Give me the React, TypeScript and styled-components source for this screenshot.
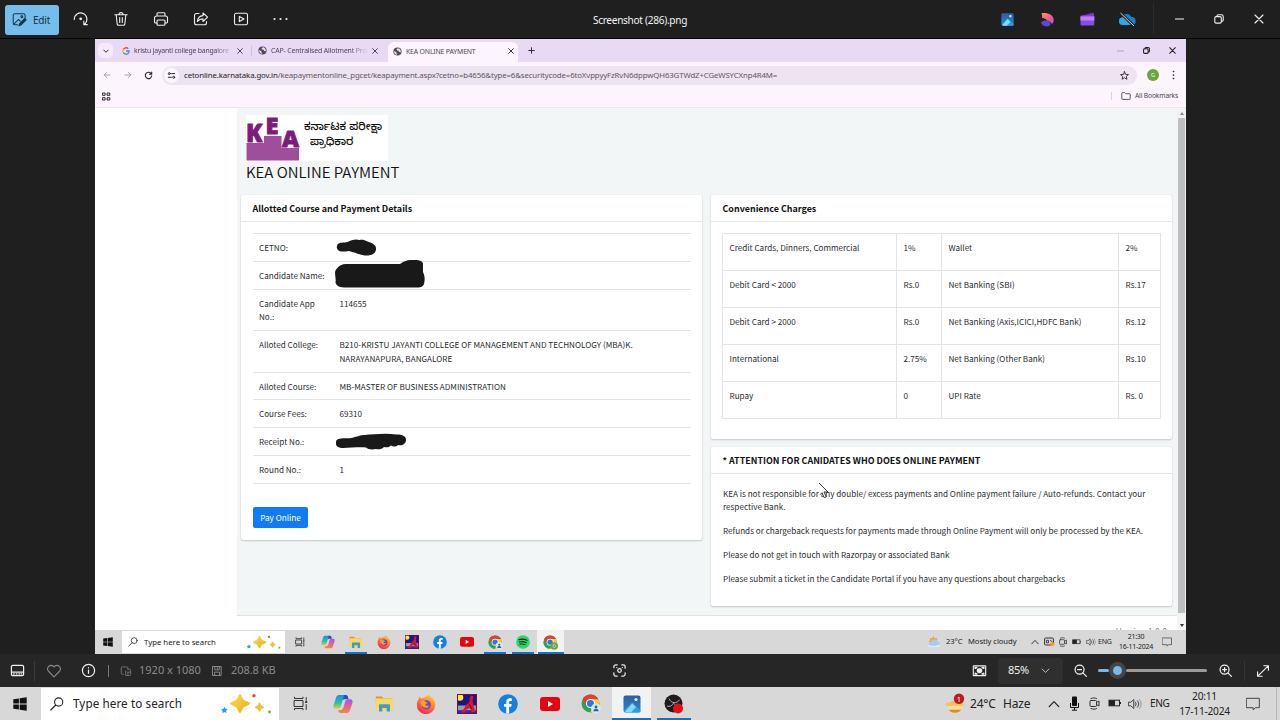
import React from 'react';
import styled, { createGlobalStyle } from 'styled-components';

const ui = `'Noto Sans', 'Open Sans', sans-serif`;
const pageFont = `'Noto Sans CJK SC', 'Open Sans', sans-serif`;

const GlobalStyle = createGlobalStyle`
  * {
    box-sizing: border-box;
  }

  body {
    margin: 0;
    background: #1f1f1f;
    overflow: hidden;
  }

  svg {
    display: block;
    flex: none;
  }
`;

/* ---------- shared parts ---------- */

const Screen = styled.div`
  width: 1280px;
  height: 720px;
  display: flex;
  flex-direction: column;
  background: #1f1f1f;
  font-family: ${ui};
  overflow: hidden;
`;

const Slot = styled.div<{ $w: number }>`
  flex: none;
  width: ${(p) => p.$w}px;
  height: 100%;
  display: flex;
  align-items: center;
  justify-content: center;
`;

const Spacer = styled.div`
  flex: 1;
`;

const Label = styled.span<{ $w: number; $size: number; $color?: string; $ls?: number }>`
  flex: none;
  width: ${(p) => p.$w}px;
  font-size: ${(p) => p.$size}px;
  letter-spacing: ${(p) => p.$ls ?? 0}px;
  color: ${(p) => p.$color ?? '#222'};
  line-height: 1.3;
  white-space: nowrap;
`;

const Divider = styled.div<{ $h: number; $color: string }>`
  flex: none;
  width: 1px;
  height: ${(p) => p.$h}px;
  background: ${(p) => p.$color};
`;

/* ---------- photo viewer ---------- */

const ViewerBar = styled.header`
  flex: none;
  height: 39px;
  display: grid;
  grid-template-columns: 1fr auto 1fr;
  align-items: center;
  padding: 0 1px 0 5px;
  border-bottom: 1px solid #050505;
`;

const BarGroup = styled.div<{ $end?: boolean }>`
  height: 38px;
  display: flex;
  align-items: center;
  justify-content: ${(p) => (p.$end ? 'flex-end' : 'flex-start')};
`;

const EditButton = styled.button`
  flex: none;
  width: 54px;
  height: 30px;
  margin: 1px 2px 0 0;
  padding: 0 0 0 7px;
  display: flex;
  align-items: center;
  gap: 6px;
  border: 0;
  border-radius: 3px;
  background: #77bdeb;
  color: #12303f;
  font: 10px ${ui};
  letter-spacing: -0.2px;
`;

const FileName = styled.h1`
  margin: 2px 0 0 -4px;
  font-size: 10.1px;
  font-weight: 400;
  letter-spacing: -0.3px;
  color: #f4f4f4;
`;

const Canvas = styled.div`
  flex: none;
  height: 615px;
  padding-left: 95px;
`;

const StatusBar = styled.footer`
  flex: none;
  height: 33px;
  display: flex;
  align-items: center;
  background: #262626;
`;

const ZoomLevel = styled.div`
  flex: none;
  width: 65px;
  height: 26px;
  padding-left: 10px;
  display: flex;
  align-items: center;
  border-radius: 3px;
  background: #2f2f2f;
`;

const Slider = styled.div`
  flex: none;
  width: 109px;
  height: 18px;
  display: flex;
  align-items: center;
`;

const Track = styled.div<{ $w: number; $color: string }>`
  width: ${(p) => p.$w}px;
  height: 3px;
  border-radius: 2px;
  background: ${(p) => p.$color};
`;

const Thumb = styled.div`
  width: 17px;
  height: 17px;
  border: 4px solid #454545;
  border-radius: 50%;
  background: #76b9ed;
`;

/* ---------- browser ---------- */

const Browser = styled.div`
  width: 1091px;
  height: 615px;
  display: flex;
  flex-direction: column;
  background: #fff;
  overflow: hidden;
`;

const TabStrip = styled.div`
  flex: none;
  height: 23px;
  display: flex;
  align-items: center;
  background: #e8daf4;
`;

const TabMenu = styled.div`
  flex: none;
  width: 15px;
  height: 15px;
  margin: 0 4px 0 3px;
  display: grid;
  place-items: center;
  border-radius: 5px;
  background: #f4eafb;
`;

const Tab = styled.div<{ $w: number; $active?: boolean }>`
  flex: none;
  width: ${(p) => p.$w}px;
  height: ${(p) => (p.$active ? '20px' : '16px')};
  margin-top: ${(p) => (p.$active ? '3px' : '0')};
  padding: ${(p) => (p.$active ? '0 4px 2px 5px' : '0 6px 0 5px')};
  display: flex;
  align-items: center;
  gap: 4px;
  border-radius: 6px 6px 0 0;
  background: ${(p) => (p.$active ? '#fcf4fe' : 'transparent')};
`;

const TabTitle = styled.span<{ $fade?: boolean; $ls?: number }>`
  flex: 1;
  min-width: 0;
  overflow: hidden;
  white-space: nowrap;
  font-size: 6.9px;
  letter-spacing: ${(p) => p.$ls ?? -0.15}px;
  color: #4b4650;
  mask-image: ${(p) => (p.$fade ? 'linear-gradient(90deg, #000 82%, transparent)' : 'none')};
`;

const AddressRow = styled.div`
  flex: none;
  height: 26px;
  display: flex;
  align-items: center;
  background: #fcf5fe;
`;

const Omnibox = styled.div`
  flex: none;
  width: 975px;
  height: 19px;
  margin-left: 1px;
  padding: 0 8px 0 2px;
  display: flex;
  align-items: center;
  border-radius: 10px;
  background: #ece4f0;
`;

const SiteChip = styled.div`
  width: 15px;
  height: 15px;
  margin-right: 5px;
  display: grid;
  place-items: center;
  border-radius: 50%;
  background: #fbf5fd;
`;

const Url = styled.span`
  flex: 1;
  font-size: 7.8px;
  letter-spacing: -0.11px;
  color: #5d5861;
  white-space: nowrap;

  b {
    font-weight: 400;
    color: #1e1b20;
  }
`;

const Avatar = styled.div`
  width: 12px;
  height: 12px;
  display: grid;
  place-items: center;
  border-radius: 50%;
  background: #67a63a;
  color: #e9f5df;
  font-size: 6px;
  line-height: 1;
`;

const BookmarkRow = styled.div`
  flex: none;
  height: 20px;
  padding-bottom: 3px;
  display: flex;
  align-items: center;
  background: #fcf5fe;
  border-bottom: 1px solid #eee3f0;
`;

const Viewport = styled.div`
  flex: none;
  height: 522px;
  display: flex;
  overflow: hidden;
`;

const Sidebar = styled.aside`
  flex: none;
  width: 142px;
  background: #fff;
`;

const Scrollbar = styled.div`
  flex: none;
  width: 9px;
  display: grid;
  grid-template-rows: 10px 495px 1fr;
  justify-items: center;
  background: #f3f3f4;
`;

const ScrollThumb = styled.div`
  width: 7px;
  background: #bdbfc1;
`;

const ScrollArrow = styled.div<{ $down?: boolean }>`
  width: 0;
  height: 0;
  margin: ${(p) => (p.$down ? '11px' : '4px')} 0 0;
  border: 2px solid transparent;
  border-top: ${(p) => (p.$down ? '3px solid #333' : '0')};
  border-bottom: ${(p) => (p.$down ? '0' : '3px solid #888')};
`;

/* ---------- payment page ---------- */

const Main = styled.main`
  flex: none;
  width: 940px;
  height: 522px;
  overflow: hidden;
  background: #f3f6f7;
  color: #2a2d30;
  font-family: ${pageFont};
  font-size: 8.15px;
  line-height: 13.7px;
`;

const PageHead = styled.div`
  height: 87px;
  padding: 7px 0 0 9px;
`;

const LogoBox = styled.div`
  width: 142px;
  height: 46px;
  display: flex;
  background: #fff;
`;

const LogoText = styled.div`
  margin: 6px 0 0 4px;
  width: 80px;
  font: 500 11.1px/15px 'Noto Sans Kannada', 'Noto Sans', sans-serif;
  color: #111;
  white-space: nowrap;

  div + div {
    padding-left: 6px;
  }
`;

const PageTitle = styled.h2`
  margin: -1px 0 0;
  font-size: 15px;
  font-weight: 350;
  line-height: 23px;
  color: #111;
`;

const Columns = styled.div`
  height: 420px;
  padding: 0 5px 0 4px;
  display: grid;
  grid-template-columns: 461px 461px;
  align-items: start;
  gap: 9px;
`;

const RightColumn = styled.div`
  display: flex;
  flex-direction: column;
  gap: 8px;
`;

const Card = styled.section<{ $h: number }>`
  height: ${(p) => p.$h}px;
  border-radius: 2px;
  background: #fff;
  box-shadow: 0 0 1px rgba(0, 0, 0, 0.15), 0 1px 2px rgba(0, 0, 0, 0.18);
`;

const CardTitle = styled.h3`
  margin: 0;
  height: 27px;
  padding: 0 11.5px;
  border-bottom: 1px solid #e4e5e6;
  font-size: 8.93px;
  font-weight: 700;
  line-height: 28px;
  color: #111;
`;

const CardBody = styled.div`
  padding: 11px 11px 0 12px;
`;

const Details = styled.dl`
  margin: 0;
  border-bottom: 1px solid #e2e4e6;
`;

const DetailRow = styled.div<{ $tall?: boolean }>`
  height: ${(p) => (p.$tall ? '41.5px' : '27.8px')};
  padding: 7px 6px 0;
  display: grid;
  grid-template-columns: 80.5px 1fr;
  border-top: 1px solid #e2e4e6;

  dt,
  dd {
    margin: 0;
  }

  dt {
    width: 72px;
  }

  dd {
    position: relative;
    width: 310px;
  }
`;

const Scribble = styled.svg`
  position: absolute;
  overflow: visible;
  left: 0;
  top: 0;
`;

const PayButton = styled.button`
  width: 55px;
  height: 21px;
  margin-top: 23px;
  padding: 0;
  border: 0;
  border-radius: 2px;
  background: #117bf7;
  color: #fff;
  font: 8.2px/20px ${pageFont};
`;

const Charges = styled.div`
  display: grid;
  grid-template-columns: 174px 45px 177px 42px;
  grid-auto-rows: 37px;
  width: 439px;
  margin-left: -1px;
  border-left: 1px solid #e2e4e6;
  border-top: 1px solid #e2e4e6;
`;

const Charge = styled.div`
  padding: 7px 6.5px;
  border-right: 1px solid #e2e4e6;
  border-bottom: 1px solid #e2e4e6;
`;

const Notice = styled.p`
  margin: 0 0 10.1px;
`;

const NoticeBody = styled.div`
  position: relative;
  padding: 12.5px 11px 0 12px;
`;

const Pointer = styled.svg`
  position: absolute;
  left: 107px;
  top: 8px;
`;

const PageFooter = styled.div`
  height: 15px;
  padding: 9px 10px 0;
  overflow: hidden;
  border-top: 1px solid #dfe2e5;
  background: #fff;
  text-align: right;
  color: #869099;
  font-size: 8.6px;
`;

/* ---------- taskbars ---------- */

const Taskbar = styled.div<{ $h: number }>`
  flex: none;
  height: ${(p) => p.$h}px;
  display: flex;
  align-items: center;
  background: #d8d8d8;
`;

const SearchBox = styled.div<{ $w: number; $h: number; $gap: number }>`
  flex: none;
  width: ${(p) => p.$w}px;
  height: ${(p) => p.$h}px;
  padding: 0 ${(p) => p.$gap}px 0 ${(p) => p.$gap + 2}px;
  display: flex;
  align-items: center;
  justify-content: space-between;
  background: #fff;
`;

const TaskButton = styled.div<{ $w: number; $line?: number; $active?: boolean }>`
  flex: none;
  width: ${(p) => p.$w}px;
  height: 100%;
  display: flex;
  align-items: center;
  justify-content: center;
  background-color: ${(p) => (p.$active ? '#f2f2f2' : 'transparent')};
  background-image: ${(p) => (p.$line ? 'linear-gradient(#1472c4, #1472c4)' : 'none')};
  background-repeat: no-repeat;
  background-position: bottom center;
  background-size: ${(p) => p.$line ?? 0}px 2px;
`;

const Clock = styled.div<{ $w: number; $size: number; $lh: number; $ls: number }>`
  flex: none;
  width: ${(p) => p.$w}px;
  text-align: center;
  font-size: ${(p) => p.$size}px;
  line-height: ${(p) => p.$lh}px;
  letter-spacing: ${(p) => p.$ls}px;
  color: #222;
  white-space: nowrap;
`;

/* ---------- line icons ---------- */

type IconProps = { s?: number; color?: string };

const Line: React.FC<IconProps & { box?: number; w?: number; children: React.ReactNode }> = ({
  s = 16,
  color = '#f0f0f0',
  box = 16,
  w = 1.1,
  children,
}) => (
  <svg
    width={s}
    height={s}
    viewBox={`0 0 ${box} ${box}`}
    fill="none"
    stroke={color}
    strokeWidth={w}
    strokeLinecap="round"
    strokeLinejoin="round"
  >
    {children}
  </svg>
);

const EditIcon = () => (
  <Line s={15} color="#12384f">
    <path d="M14 6V3.5A1.7 1.7 0 0 0 12.3 1.8H3A1.7 1.7 0 0 0 1.3 3.5V12A1.7 1.7 0 0 0 3 13.7H6" />
    <path d="M2 13l4.8-5 2 1.8" />
    <path d="M13.6 6.8L8.5 12l-1.200 2.800L10 13.600l5.100-5.200z" fill="#12384f" />
    <circle cx="10.500" cy="5" r="1" />
  </Line>
);

const RotateIcon = () => (
  <Line>
    <path d="M1.300 8.500A6.300 6.300 0 1 1 11.300 13.300M14.300 13.600h-3.500v-3.500" />
    <circle cx="7.700" cy="7.800" r="1.400" fill="#f0f0f0" stroke="none" />
  </Line>
);

const TrashIcon = () => (
  <Line>
    <path d="M1.800 3.800h12.400M3.200 4l1 9.200a1.300 1.300 0 0 0 1.300 1.100h5a1.300 1.300 0 0 0 1.300-1.100l1-9.200M6 3.600a2 2 0 0 1 4 0M6.700 6.500v5M9.300 6.500v5" />
  </Line>
);

const PrintIcon = () => (
  <Line>
    <path d="M4 5V2.800c0-.6.400-1 1-1h6c.6 0 1 .4 1 1V5M4 12H2.800a1.300 1.300 0 0 1-1.300-1.300V7a2 2 0 0 1 2-2h9a2 2 0 0 1 2 2v3.700a1.300 1.300 0 0 1-1.300 1.300H12" />
    <rect x="4" y="9" width="8" height="5.200" rx="1" />
  </Line>
);

const ShareIcon = () => (
  <Line>
    <path d="M6 2.500H3.500a2 2 0 0 0-2 2v7.300a2 2 0 0 0 2 2h8a2 2 0 0 0 2-2V10.500" />
    <path d="M10 2v2.600C6.500 4.900 4.800 7 4.400 10.500 6 8.500 7.700 7.900 10 7.900v2.600l4.600-4.300z" />
  </Line>
);

const PlayIcon = () => (
  <Line>
    <rect x="1.500" y="2.300" width="13" height="11.400" rx="1.800" />
    <path d="M6.300 5.400v5.200L11 8z" />
  </Line>
);

const DotsIcon = () => (
  <svg width="17" height="4" viewBox="0 0 17 4" fill="#f0f0f0">
    <circle cx="1.500" cy="2" r="1.100" />
    <circle cx="7.500" cy="2" r="1.100" />
    <circle cx="13.500" cy="2" r="1.100" />
  </svg>
);

const CloseIcon: React.FC<IconProps> = ({ s = 10, color = '#f0f0f0' }) => (
  <Line s={s} box={10} w={s < 8 ? 1.5 : 1.1} color={color}>
    <path d="M1 1l8 8M9 1L1 9" />
  </Line>
);

const RestoreIcon: React.FC<IconProps> = ({ s = 10, color = '#f0f0f0' }) => (
  <Line s={s} box={10} color={color} w={s < 8 ? 1.5 : 1.1}>
    <rect x=".8" y="2.600" width="6.500" height="6.500" rx="1.300" />
    <path d="M3 2.400V2A1.200 1.200 0 0 1 4.200.8H7.500A1.700 1.700 0 0 1 9.200 2.500V6A1.200 1.200 0 0 1 8 7.200H7.500" />
  </Line>
);

const MinIcon: React.FC<IconProps> = ({ s = 9, color = '#c4c4c4' }) => (
  <svg width={s} height="2" viewBox="0 0 9 2" preserveAspectRatio="none">
    <path d="M0 1h9" stroke={color} strokeWidth="1.300" />
  </svg>
);

const Chevron: React.FC<IconProps & { up?: boolean; w?: number }> = ({ s = 8, color = '#222', up, w = 1.1 }) => (
  <Line s={s} box={8} color={color} w={w}>
    <path d={up ? 'M.8 5.800L4 2.400l3.200 3.400' : 'M1 2.700l3 3 3-3'} />
  </Line>
);

const FilmstripIcon = () => (
  <Line s={15} w={1.3}>
    <rect x="1.500" y="2.500" width="13" height="11" rx="1.500" />
    <path d="M2 9.700h12" />
    <path d="M3.800 11.700h.8M6.700 11.700h.8M9.500 11.700h.8M12 11.700h.5" />
  </Line>
);

const HeartIcon = () => (
  <Line s={16} color="#8a8a8a">
    <path d="M8 13.800L2.300 8A3.500 3.500 0 0 1 7.300 3.200L8 3.900l.7-.7A3.500 3.500 0 0 1 13.700 8z" />
  </Line>
);

const InfoIcon = () => (
  <Line s={15} w={1.3}>
    <circle cx="8" cy="8" r="6.500" />
    <path d="M8 7.500v3.500M8 5v.2" />
  </Line>
);

const DimensionsIcon = () => (
  <Line s={12} color="#777" w={1.2}>
    <path d="M4.500 12.500H3.300A1.600 1.600 0 0 1 1.700 10.900V4A1.600 1.600 0 0 1 3.300 2.500H9A1.600 1.600 0 0 1 10.500 4v1.500" />
    <path d="M10.500 5.500h2A1.600 1.600 0 0 1 14.200 7v5.500a1.600 1.600 0 0 1-1.600 1.500H7.500V8M10.500 9.500h3.500M10.500 9.500V14" />
  </Line>
);

const SaveIcon = () => (
  <Line s={12} color="#8a8a8a" w={1.3}>
    <path d="M2.500 2h11v12h-11zM5 2v4.500h6V2M4.800 14V9.500h6.500V14M8.500 3.500v1.500" />
  </Line>
);

const FocusIcon = () => (
  <Line s={15} w={1.3}>
    <path d="M2 5V4a2 2 0 0 1 2-2h1.500M10.500 2H12a2 2 0 0 1 2 2v1.500M14 10.500V12a2 2 0 0 1-2 2h-1.500M5.500 14H4a2 2 0 0 1-2-2v-1.500" />
    <circle cx="8" cy="8" r="1.900" />
    <path d="M5 4.800h.1M11 4.800h.1" />
  </Line>
);

const FitIcon = () => (
  <Line s={15} w={1.2}>
    <rect x="1.400" y="3" width="13.200" height="10.500" rx=".5" />
    <path d="M3.500 5.500v-.6h1.500M11 4.900h1.500v.6M12.500 11v.6H11M5 11.600H3.500V11" strokeWidth="1.800" />
    <rect x="5" y="5.700" width="6" height="5.200" rx="2.300" fill="#eee" stroke="none" />
  </Line>
);

const ZoomIcon: React.FC<{ plus?: boolean }> = ({ plus }) => (
  <Line s={15} w={1.3}>
    <circle cx="7" cy="7" r="4.800" />
    <path d={plus ? 'M10.600 10.600L14.300 14.300M4.900 7h4.200M7 4.900v4.200' : 'M10.600 10.600L14.300 14.300M4.900 7h4.200'} />
  </Line>
);

const ExpandIcon = () => (
  <Line s={14} w={1.3}>
    <path d="M9 2h5.200v5M14 2.200L2 13.800M7 14H1.800V9" />
  </Line>
);

const ArrowIcon: React.FC<{ right?: boolean }> = ({ right }) => (
  <Line s={8} box={8} color="#a39ca8" w={0.9}>
    <path d={right ? 'M.8 4h6M4.300 1.500L6.900 4 4.300 6.500' : 'M7.200 4h-6M3.700 1.500L1.100 4l2.600 2.500'} />
  </Line>
);

const ReloadIcon = () => (
  <Line s={9} box={9} color="#2b2830" w={1.1}>
    <path d="M7.700 4.800A3.200 3.200 0 1 1 6.900 2.300M7.700 1v2.200H5.500" />
  </Line>
);

const TuneIcon = () => (
  <Line s={9} box={9} color="#2b2830" w={1}>
    <circle cx="2.300" cy="2.600" r="1" />
    <path d="M4.600 2.600h3M1.300 6.300h3" />
    <circle cx="6.700" cy="6.300" r="1" />
  </Line>
);

const StarIcon = () => (
  <Line s={9} box={16} color="#2b2830" w={1.6}>
    <path d="M8 1.300l2 4.700 5 .4-3.800 3.300 1.200 5L8 12l-4.400 2.700 1.200-5L1 6.400 6 6z" />
  </Line>
);

const MoreIcon = () => (
  <svg width="3" height="10" viewBox="0 0 3 10" fill="#2b2830">
    <circle cx="1.500" cy="1.500" r=".85" />
    <circle cx="1.500" cy="5" r=".85" />
    <circle cx="1.500" cy="8.500" r=".85" />
  </svg>
);

const AppsIcon = () => (
  <Line s={9} box={9} color="#2b2830" w={1}>
    <rect x=".8" y="1" width="2.300" height="2.300" />
    <rect x="5.500" y="1" width="2.300" height="2.300" />
    <rect x=".8" y="5.700" width="2.300" height="2.300" />
    <rect x="5.500" y="5.700" width="2.300" height="2.300" />
  </Line>
);

const FolderLine = () => (
  <Line s={10} box={10} color="#4b4650" w={0.9}>
    <path d="M.8 2.200c0-.4.200-.6.600-.6h2.400l1 1.100h3.900c.3 0 .5.200.5.500v4.600c0 .4-.2.600-.6.600H1.400c-.4 0-.6-.2-.6-.6z" />
  </Line>
);

const GlobeIcon = () => (
  <svg width="9" height="9" viewBox="0 0 16 16">
    <circle cx="8" cy="8" r="7.300" fill="#504b56" />
    <path d="M2 7l4 2.500 1 4.500C4 13.500 1.700 11 2 7zM8.500 2l-2 2 .5 2 3 .5 1 2.500 3 .2C14.500 5 12 2.300 8.500 2z" fill="#e9deef" />
  </svg>
);

const GoogleG = () => (
  <svg width="8" height="8" viewBox="0 0 16 16" fill="none" strokeWidth="2.600">
    <path d="M12.500 3.300A6.300 6.300 0 0 0 2.500 5" stroke="#ea4335" />
    <path d="M2.500 5a6.300 6.300 0 0 0 0 6" stroke="#fbbc05" />
    <path d="M2.500 11A6.300 6.300 0 0 0 12 12.800" stroke="#34a853" />
    <path d="M12 12.800a6.300 6.300 0 0 0 2.200-4.800H8" stroke="#4285f4" />
  </svg>
);

/* ---------- app icons ---------- */

const PhotosIcon: React.FC<IconProps> = ({ s = 13 }) => (
  <svg width={s} height={s} viewBox="0 0 18 18">
    <defs>
      <linearGradient id="photoSky" x1="0" y1="0" x2="0" y2="1">
        <stop offset="0" stopColor="#2e5f9e" />
        <stop offset="1" stopColor="#2a87d0" />
      </linearGradient>
    </defs>
    <rect x=".5" y=".5" width="17" height="17" rx="2" fill="url(#photoSky)" />
    <path d="M1 15.500L8.300 8.200a1.300 1.300 0 0 1 1.800 0L17.500 15.500V16a1.500 1.500 0 0 1-1.500 1.500H2.500z" fill="#2f9be2" />
    <path d="M2 16.500l7.200-8.100 3.800 3.600-5 5.500H3z" fill="#7fdcf7" />
    <circle cx="13" cy="4.500" r="1.600" fill="#d8f1fc" />
  </svg>
);

const DesignerIcon = () => (
  <svg width="14" height="15" viewBox="0 0 14 15">
    <defs>
      <linearGradient id="designTop" x1="0" y1="0" x2="1" y2="1">
        <stop offset="0" stopColor="#ff9a4d" />
        <stop offset=".6" stopColor="#e8579b" />
        <stop offset="1" stopColor="#a45cf0" />
      </linearGradient>
    </defs>
    <path d="M1.500 1.300C7 .2 13.700 2.500 13.700 8c0 2-.8 3.200-1.700 4-1.200-2.300-3-3-5-3.200C6.500 6.800 4 6.500 2 6 2.500 4 2 3 1.500 1.300z" fill="url(#designTop)" />
    <path d="M1 10c2.500-2 7-2.200 9 .3 1 1.200.6 2.500-.5 3.500-2.500 1.200-8 .8-8.500-3.800z" fill="#5b46d6" />
  </svg>
);

const ClipchampIcon = () => (
  <svg width="15" height="14" viewBox="0 0 15 14">
    <path d="M.8 4L12.500.8a1.200 1.200 0 0 1 1.500 1V5H.8z" fill="#6d36c4" />
    <rect x=".5" y="3.500" width="13.800" height="10" rx="1.300" fill="#8a4be8" />
    <path d="M.5 4.500h13.800v4H.5z" fill="#c27cf5" />
  </svg>
);

const CloudOffIcon = () => (
  <svg width="18" height="15" viewBox="0 0 18 15">
    <path d="M4.500 13A3.800 3.800 0 0 1 4 5.500 5 5 0 0 1 13.300 5 4 4 0 0 1 14 13z" fill="#1b7fcb" />
    <path d="M4.500 13A3.800 3.800 0 0 1 4 5.500c3 0 6.500 3 8 7.500z" fill="#31a5e8" />
    <path d="M2.500 1l13.500 13" stroke="#1f1f1f" strokeWidth="2.600" />
    <path d="M2.500 1l13.500 13" stroke="#d9d9d9" strokeWidth="1" />
  </svg>
);

const WindowsLogo: React.FC<IconProps> = ({ s = 14 }) => (
  <svg width={s} height={s} viewBox="0 0 14 14" fill="#111">
    <path d="M.3 2.200L5.900 1.400v5.200H.3zM6.700 1.300L13.700.3v6.300h-7zM.3 7.400h5.600v5.200L.3 11.800zM6.700 7.400h7v6.300l-7-1z" />
  </svg>
);

const SearchGlass: React.FC<IconProps> = ({ s = 14 }) => (
  <Line s={s} box={14} color="#222" w={1.1}>
    <circle cx="8.700" cy="5" r="4.100" />
    <path d="M5.700 8L.8 13" />
  </Line>
);

const Sparkles: React.FC<{ w: number }> = ({ w }) => (
  <svg width={w} height={(w * 22) / 52} viewBox="0 0 52 22">
    <defs>
      <linearGradient id="spark" x1="0" y1="0" x2="1" y2="1">
        <stop offset="0" stopColor="#ffdf5c" />
        <stop offset="1" stopColor="#e9a90f" />
      </linearGradient>
    </defs>
    <path d="M20 1c1.500 0 1.800 3.800 3.500 5.600S30 9 30 10.600s-5 2.400-6.500 4S21.500 20 20 20s-2-3.700-3.500-5.400-6.500-2.400-6.500-4 4.900-2.300 6.500-4S18.500 1 20 1z" fill="url(#spark)" />
    <path d="M39.500 9.500c.9 0 1 2 1.800 2.800s2.900 1.100 2.900 1.900-2.100 1.200-2.900 2-.9 2.600-1.800 2.600-1-1.800-1.800-2.600-2.900-1.200-2.900-2 2.100-1.100 2.900-1.900.9-2.800 1.800-2.800z" fill="#f2be3c" />
    <path d="M4.500 13.800l.9 2 2.200.3-1.400 1.700.2 2.100-2-.8-2.100 1.100.2-2.300-1.500-1.500 2.200-.5z" fill="#2f9fd8" />
    <circle cx="34" cy="2.800" r="1.700" fill="#d8532f" />
    <circle cx="49.500" cy="18.800" r="1.600" fill="#7cc142" />
  </svg>
);

const TaskViewIcon: React.FC<IconProps> = ({ s = 15 }) => (
  <Line s={s} box={15} color="#333" w={s < 12 ? 1.3 : 1}>
    <rect x="1.500" y="4.500" width="8.500" height="6" />
    <path d="M1.500 1.200v1.300h8.500V1.200M1.500 13.800v-1.300h8.500v1.300M13.200 1.500v2.500M13.200 8.500V13.500" />
    <path d="M13.200 4.800v2.200" strokeWidth="2" strokeLinecap="butt" />
  </Line>
);

const CopilotIcon: React.FC<IconProps> = ({ s = 20 }) => (
  <svg width={s} height={s} viewBox="0 0 20 20">
    <defs>
      <linearGradient id="cpA" x1="0" y1="0" x2="0" y2="1">
        <stop offset="0" stopColor="#1a8fe8" />
        <stop offset=".6" stopColor="#2fc0a8" />
        <stop offset="1" stopColor="#e8cf2e" />
      </linearGradient>
      <linearGradient id="cpB" x1="0" y1="0" x2="0" y2="1">
        <stop offset="0" stopColor="#9a5cf0" />
        <stop offset=".5" stopColor="#ec5b9a" />
        <stop offset="1" stopColor="#f6873c" />
      </linearGradient>
    </defs>
    <path d="M6 1h6.500c1.500 0 2 1 2.500 2.700h-2C11 3.700 10 5 9.300 7.500L8 12c-.6 2-1.500 2.800-3.500 2.800H2.500C.6 14.800 0 13 .6 11L3 3.700C3.600 2 4.500 1 6 1z" fill="url(#cpA)" />
    <path d="M11 1h1.500c1.600 0 2.200 1 2.700 2.800l.4 1.400h-4.300c-.6 0-1 .3-1.400 1L10.500 3z" fill="#1b55c4" />
    <path d="M14 19H7.500C6 19 5.500 18 5 16.300h2c2 0 3-1.300 3.700-3.800L12 8c.6-2 1.500-2.800 3.500-2.800h2c1.900 0 2.500 1.800 1.900 3.800L17 16.300C16.400 18 15.500 19 14 19z" fill="url(#cpB)" />
  </svg>
);

const ExplorerIcon: React.FC<IconProps> = ({ s = 19 }) => (
  <svg width={s} height={s} viewBox="0 0 19 19">
    <path d="M.8 2.500h6l1.500 1.700H17v4H.8z" fill="#d99c23" />
    <rect x=".8" y="4.500" width="17.400" height="12" rx=".6" fill="#fbd866" />
    <path d="M4 17.500v-6.300c0-.6.400-1 1-1h9c.6 0 1 .4 1 1v6.300h-3.300V14H7.300v3.500z" fill="#3b9fc0" />
  </svg>
);

const FirefoxIcon: React.FC<IconProps> = ({ s = 20 }) => (
  <svg width={s} height={s} viewBox="0 0 20 20">
    <defs>
      <linearGradient id="ffBody" x1=".8" y1="0" x2=".3" y2="1">
        <stop offset="0" stopColor="#ffd43a" />
        <stop offset=".45" stopColor="#ff8030" />
        <stop offset="1" stopColor="#e8295c" />
      </linearGradient>
    </defs>
    <path d="M13 .5c.5 1.500 2 2.300 3 3.300C18 5.500 19.300 8 19.200 11a9.200 9.200 0 0 1-18.400 0c0-2.800 1-4.600 2-6L3 2.700l2 1.800c1-.6 2-.8 3-.8C9.500 3 11 2 13 .5z" fill="url(#ffBody)" />
    <circle cx="10.300" cy="10.800" r="4.600" fill="#7548b5" />
    <path d="M4.500 7.500c2-1.300 4-.5 5.200.5l2 .4c-.6 1.200-2 1.300-2.400 2 .8 1.800 2.800 1.500 4 .8-.8 2.600-4.200 3.500-6.500 1.500C5.200 11.200 4.800 9.500 4.500 7.500z" fill="#ff9b34" />
  </svg>
);

const GameIcon: React.FC<IconProps> = ({ s = 20 }) => (
  <svg width={s} height={s} viewBox="0 0 20 20">
    <rect width="20" height="20" fill="#1b1490" />
    <path d="M1 11.500h18v5H1z" fill="#9a9aae" />
    <path d="M1 16.500h18v2.800H1z" fill="#2727c8" />
    <circle cx="3" cy="3.500" r="3.300" fill="#ffe92e" />
    <path d="M14 1.500l2.500 1-1 4 1 5 2 6.500h-4l-1.500-4-3.500 1.500-1.500 3H4l3-4L11 8z" fill="#d61a2b" />
    <path d="M13 5.500l-2.500 4.500M12.500 10.500l2 4.500" stroke="#4a0a22" strokeWidth="1" />
    <path d="M.5.5h19v19H.5z" fill="none" stroke="#7a1026" />
  </svg>
);

const FacebookIcon: React.FC<IconProps> = ({ s = 20 }) => (
  <svg width={s} height={s} viewBox="0 0 20 20">
    <circle cx="10" cy="10" r="9.800" fill="#1580e0" />
    <path d="M8.300 19.500v-6.800H6V9.900h2.300V8c0-2.500 1.400-3.700 3.600-3.700.8 0 1.500.1 1.900.2v2.400h-1.300c-1 0-1.400.6-1.400 1.500v1.500h2.600l-.5 2.800h-2.100v6.800z" fill="#fff" />
  </svg>
);

const YoutubeIcon: React.FC<IconProps> = ({ s = 20 }) => (
  <svg width={s} height={s * 0.7} viewBox="0 0 20 14">
    <rect width="20" height="14" rx="3" fill="#e6050f" />
    <path d="M8 4v6l5-3z" fill="#fff" />
  </svg>
);

const ChromeIcon: React.FC<IconProps & { badge: 'user' | 'g' }> = ({ s = 20, badge }) => (
  <svg width={s} height={s} viewBox="0 0 20 20">
    <circle cx="9.500" cy="9.500" r="9" fill="#34a04f" />
    <path d="M9.500.5a9 9 0 0 1 7.900 4.800H9.500L5.400 11.500 1.700 5A9 9 0 0 1 9.500.5z" fill="#e0402f" />
    <path d="M17.400 5.300A9 9 0 0 1 9 18.500l4.300-7-3.800-6.200z" fill="#fcc934" />
    <circle cx="9.500" cy="9.500" r="4.600" fill="#fff" />
    <circle cx="9.500" cy="9.500" r="3.600" fill="#2b78e4" />
    {badge === 'user' ? (
      <g>
        <circle cx="15" cy="14.500" r="4.900" fill="#d6e6f8" />
        <circle cx="15" cy="13" r="1.400" fill="#2c5f9e" />
        <path d="M12.300 17.300c.2-3.300 5.200-3.300 5.400 0z" fill="#2c5f9e" />
      </g>
    ) : (
      <g>
        <circle cx="15" cy="14.500" r="5" fill="#68a83c" />
        <rect x="13.500" y="12.500" width="3" height="4" rx="1.300" fill="none" stroke="#d9efc7" strokeWidth=".9" />
      </g>
    )}
  </svg>
);

const SpotifyIcon: React.FC<IconProps> = ({ s = 14 }) => (
  <svg width={s} height={s} viewBox="0 0 20 20" fill="none" stroke="#12251a" strokeLinecap="round">
    <circle cx="10" cy="10" r="9.800" fill="#2bd866" stroke="none" />
    <path d="M4.500 6.500c4-1.100 8-.7 11.200 1" strokeWidth="2" />
    <path d="M5 10c3.300-.9 6.700-.6 9.600 1" strokeWidth="1.700" />
    <path d="M5.500 13.200c2.800-.7 5.400-.4 7.800.9" strokeWidth="1.400" />
  </svg>
);

const ObsIcon = () => (
  <svg width="20" height="20" viewBox="0 0 20 20">
    <circle cx="9.500" cy="9.500" r="9" fill="#1d1b1e" />
    <path d="M5 4.500c1.500 3 3 4 5 4.200s4.500-1 5.500-3M9.700 8.700c-1.200 3-4 4.300-6.700 3.300M10 9.500c2 1.500 2.500 4 1 7" stroke="#bdbdbd" strokeWidth=".9" fill="none" />
    <circle cx="14" cy="14.500" r="5" fill="#e3101b" />
  </svg>
);

const MicIcon = () => (
  <svg width="11" height="15" viewBox="0 0 11 15" fill="#111">
    <rect x="3" y=".5" width="5" height="9.500" rx=".8" />
    <path d="M1.500 7v4.500h8V7M5.500 11.500V14M3 14.200h5" fill="none" stroke="#111" strokeWidth="1" />
  </svg>
);

const CameraIcon: React.FC<IconProps> = ({ s = 13 }) => (
  <Line s={s} box={13} color="#333" w={1}>
    <rect x="2" y="3.500" width="6.500" height="6" rx="1" />
    <path d="M8.500 5.500L11 4v5L8.500 7.500M3 1.500C5 .7 7 .7 8.500 1.500M3 11.600c2 .8 4 .8 5.500 0" />
  </Line>
);

const BatteryIcon: React.FC<IconProps> = ({ s = 13 }) => (
  <svg width={s} height={s * 0.62} viewBox="0 0 13 8">
    <rect x="1" y="1.200" width="10.500" height="5.600" fill="none" stroke="#222" strokeWidth="1" />
    <path d="M1 1.200h6v5.600H1zM12 3h1v2h-1z" fill="#222" />
  </svg>
);

const SpeakerIcon: React.FC<IconProps> = ({ s = 14 }) => (
  <Line s={s} box={14} color="#333" w={0.9}>
    <path d="M.8 5.200h2L5.800 2.500v9L2.800 8.800h-2zM7.500 5.200c.8 1 .8 2.600 0 3.600M9.500 3.800c1.600 1.800 1.600 4.600 0 6.400" />
    <path d="M11.500 2.500c2.200 2.500 2.200 6.500 0 9" stroke="#888" />
  </Line>
);

const BubbleIcon: React.FC<IconProps> = ({ s = 14 }) => (
  <Line s={s} box={14} color="#333" w={0.9}>
    <path d="M.7 1.300h12.600v9.400H9.300l-2.100 2.200v-2.200H.7z" />
  </Line>
);

const MailIcon = () => (
  <svg width="11" height="10" viewBox="0 0 11 10">
    <rect x=".6" y="1" width="8.800" height="7" rx="1" fill="none" stroke="#333" strokeWidth="1" />
    <path d="M2.500 3.300h2v2.500h-2zM6 3l2.500 2" stroke="#333" strokeWidth=".9" fill="none" />
    <path d="M6 5.500h4.500v2.300L8.200 9.600 6 7.800z" fill="#eda12c" />
  </svg>
);

const CloudSunIcon = () => (
  <svg width="15" height="14" viewBox="0 0 15 14">
    <path d="M6.500 1l1.200 2.300 2.600-.4-.8 2.500 1.500 2H3l-1.500-1L3.300 5l-.8-2 2.500.3z" fill="#eba541" />
    <path d="M3.500 12.500a2.800 2.800 0 0 1 0-5.500 3.700 3.700 0 0 1 7-.3 3 3 0 0 1 .7 5.800z" fill="#a7c9f2" />
    <path d="M3.500 12.500A2.800 2.800 0 0 1 1 9.500c3 1.800 7 1.500 12.500 0a3 3 0 0 1-2.300 3z" fill="#dbeafc" />
  </svg>
);

const HazeIcon = () => (
  <svg width="20" height="22" viewBox="0 0 20 22">
    <path d="M3 12a7.500 6 0 0 1 14 0z" fill="#f2a236" />
    <rect x=".5" y="9.500" width="18" height="3.400" rx="1.700" fill="#f6c65c" />
    <rect x="2.500" y="13.300" width="16" height="3.200" rx="1.600" fill="#f9e09a" />
    <path d="M4 16.800h12c-1 2-3 2.900-6 2.900s-5-.9-6-2.900z" fill="#dc8b22" />
    <circle cx="14" cy="5.700" r="5.200" fill="#bf1a22" />
    <text x="14" y="8.500" textAnchor="middle" fontSize="7.500" fill="#fff">
      1
    </text>
  </svg>
);

const KeaLogo = () => (
  <svg width="54" height="46" viewBox="0 0 54 46" fontFamily="'Open Sans', sans-serif" fontWeight="800">
    <path d="M.5 28h17.500V21h17.500V33H53V45.500H.5z" fill="#a04e9c" />
    <g fill="#7f1a7c" stroke="#7f1a7c" strokeWidth=".8">
      <text x="0" y="27" fontSize="24" textLength="16.500" lengthAdjust="spacingAndGlyphs">
        K
      </text>
      <text x="19.500" y="19.200" fontSize="22" textLength="13" lengthAdjust="spacingAndGlyphs">
        E
      </text>
      <text x="36" y="32.400" fontSize="22.500" textLength="17" lengthAdjust="spacingAndGlyphs">
        A
      </text>
    </g>
  </svg>
);

/* ---------- content ---------- */

const scribbles = {
  cetno: 'M-2.500-3.500C-.5-6 3.500-5 7.500-6 11.500-8 15.500-9.500 19.500-8c3-.5 5 0 8 1.500 4 1 8.500 3.500 8.500 6.500C36.500 4 33.500 7.500 26.500 7.500 20.500 7.500 14.500 4 8.500 3 3.500 4-.5 4-2.500 1.500c-1-1.500-1-3.500 0-5z',
  name: 'M-3-7.500c2-3 5-4.500 9-4.500h54c3-2 6-4 12-4 6-.5 11 .5 11 4v8c2 4 2 8 1 12-1 3-4 3.500-8 3.500H6C0 11.500-3.500 10.500-4.500 6.500-3.500 1.500-7-4.500-3-7.500z',
  receipt: 'M-1.500-3c4-1.500 9 0 13-1 5-1 8-3 13-3 9-.5 20-2 32-.5 6 0 10 2 9.500 5.500 0 4-4 6-8 5-2 2-5 2-7 .5-2 2-5 2-7 1.500-2 2.500-6 2.500-8 2-4 1-8 .5-10-1.500-5-.5-15 0-23 .5C-2.500 6-4.500 3.500-4 .5-4-1.500-3.500-2.500-1.500-3z',
};

const details: { term: string; value?: string; mark?: string; tall?: boolean }[] = [
  { term: 'CETNO:', mark: scribbles.cetno },
  { term: 'Candidate Name:', mark: scribbles.name },
  { term: 'Candidate App No.:', value: '114655', tall: true },
  {
    term: 'Alloted College:',
    value: 'B210-KRISTU JAYANTI COLLEGE OF MANAGEMENT AND TECHNOLOGY (MBA)K. NARAYANAPURA, BANGALORE',
    tall: true,
  },
  { term: 'Alloted Course:', value: 'MB-MASTER OF BUSINESS ADMINISTRATION' },
  { term: 'Course Fees:', value: '69310' },
  { term: 'Receipt No.:', mark: scribbles.receipt },
  { term: 'Round No.:', value: '1' },
];

const charges = [
  ['Credit Cards, Dinners, Commercial', '1%', 'Wallet', '2%'],
  ['Debit Card < 2000', 'Rs.0', 'Net Banking (SBI)', 'Rs.17'],
  ['Debit Card > 2000', 'Rs.0', 'Net Banking (Axis,ICICI,HDFC Bank)', 'Rs.12'],
  ['International', '2.75%', 'Net Banking (Other Bank)', 'Rs.10'],
  ['Rupay', '0', 'UPI Rate', 'Rs. 0'],
];

const notices = [
  'KEA is not responsible for any double/ excess payments and Online payment failure / Auto-refunds. Contact your respective Bank.',
  'Refunds or chargeback requests for payments made through Online Payment will only be processed by the KEA.',
  'Please do not get in touch with Razorpay or associated Bank',
  'Please submit a ticket in the Candidate Portal if you have any questions about chargebacks',
];

const PaymentPage: React.FC = () => (
  <Main>
    <PageHead>
      <LogoBox>
        <KeaLogo />
        <LogoText>
          <div>ಕರ್ನಾಟಕ ಪರೀಕ್ಷಾ</div>
          <div>ಪ್ರಾಧಿಕಾರ</div>
        </LogoText>
      </LogoBox>
      <PageTitle>KEA ONLINE PAYMENT</PageTitle>
    </PageHead>
    <Columns>
      <Card $h={345}>
        <CardTitle>Allotted Course and Payment Details</CardTitle>
        <CardBody>
          <Details>
            {details.map((d) => (
              <DetailRow key={d.term} $tall={d.tall}>
                <dt>{d.term}</dt>
                <dd>
                  {d.value}
                  {d.mark && (
                    <Scribble width="90" height="14" viewBox="0 -7 90 14">
                      <path d={d.mark} fill="#191919" />
                    </Scribble>
                  )}
                </dd>
              </DetailRow>
            ))}
          </Details>
          <PayButton>Pay Online</PayButton>
        </CardBody>
      </Card>
      <RightColumn>
        <Card $h={244}>
          <CardTitle>Convenience Charges</CardTitle>
          <CardBody>
            <Charges>
              {charges.flat().map((c, i) => (
                <Charge key={i}>{c}</Charge>
              ))}
            </Charges>
          </CardBody>
        </Card>
        <Card $h={159}>
          <CardTitle>* ATTENTION FOR CANIDATES WHO DOES ONLINE PAYMENT</CardTitle>
          <NoticeBody>
            {notices.map((n) => (
              <Notice key={n}>{n}</Notice>
            ))}
            <Pointer width="11" height="17" viewBox="0 0 11 17">
              <path d="M1 1v12.500l3-2.800 2.200 5 2-.9-2.200-4.800H10z" fill="#fff" />
              <path d="M1 1l9 9H6l2.200 4.800-2 .9L4 10.700l-2 2" fill="none" stroke="#222" strokeWidth=".9" />
            </Pointer>
          </NoticeBody>
        </Card>
      </RightColumn>
    </Columns>
    <PageFooter>Version 1.0.0</PageFooter>
  </Main>
);

const InnerTaskbar: React.FC = () => (
  <Taskbar $h={24}>
    <Slot $w={26}>
      <WindowsLogo s={10} />
    </Slot>
    <Slot $w={1} />
    <SearchBox $w={163} $h={22} $gap={4}>
      <SearchGlass s={10} />
      <Label $w={96} $size={7.8} $ls={0}>
        Type here to search
      </Label>
      <Sparkles w={35} />
    </SearchBox>
    <Slot $w={29}>
      <TaskViewIcon s={10} />
    </Slot>
    <TaskButton $w={28}>
      <CopilotIcon s={14} />
    </TaskButton>
    <TaskButton $w={28} $line={22}>
      <ExplorerIcon s={14} />
    </TaskButton>
    <TaskButton $w={28}>
      <FirefoxIcon s={14} />
    </TaskButton>
    <TaskButton $w={28}>
      <GameIcon s={14} />
    </TaskButton>
    <TaskButton $w={27}>
      <FacebookIcon s={14} />
    </TaskButton>
    <TaskButton $w={28}>
      <YoutubeIcon s={14} />
    </TaskButton>
    <TaskButton $w={28} $line={22}>
      <ChromeIcon s={15} badge="user" />
    </TaskButton>
    <TaskButton $w={28} $line={22}>
      <SpotifyIcon s={14} />
    </TaskButton>
    <TaskButton $w={27} $line={26} $active>
      <ChromeIcon s={15} badge="g" />
    </TaskButton>
    <Spacer />
    <Slot $w={24}>
      <CloudSunIcon />
    </Slot>
    <Label $w={22} $size={7.6} $ls={-0.1}>
      23°C
    </Label>
    <Label $w={60} $size={7.6} $ls={-0.05}>
      Mostly cloudy
    </Label>
    <Slot $w={14}>
      <Chevron s={8} up w={0.9} />
    </Slot>
    <Slot $w={14}>
      <MailIcon />
    </Slot>
    <Slot $w={14}>
      <CameraIcon s={10} />
    </Slot>
    <Slot $w={13}>
      <BatteryIcon s={9} />
    </Slot>
    <Slot $w={15}>
      <SpeakerIcon s={10} />
    </Slot>
    <Label $w={20} $size={7} $ls={-0.2}>
      ENG
    </Label>
    <Clock $w={36} $size={7} $lh={10} $ls={-0.25}>
      21:30
      <br />
      16-11-2024
    </Clock>
    <Slot $w={26}>
      <BubbleIcon s={10} />
    </Slot>
    <Slot $w={6} />
  </Taskbar>
);

const BrowserWindow: React.FC = () => (
  <Browser>
    <TabStrip>
      <TabMenu>
        <Chevron s={6} color="#2b2830" w={1.3} />
      </TabMenu>
      <Tab $w={132}>
        <GoogleG />
        <TabTitle $fade $ls={-0.2}>
          kristu jayanti college bangalore
        </TabTitle>
        <CloseIcon s={6} color="#3d3942" />
      </Tab>
      <Slot $w={4}>
        <Divider $h={10} $color="#cfc0dc" />
      </Slot>
      <Tab $w={131}>
        <GlobeIcon />
        <TabTitle $fade>CAP- Centralised Allotment Process</TabTitle>
        <CloseIcon s={6} color="#3d3942" />
      </Tab>
      <Slot $w={4} />
      <Tab $w={130} $active>
        <GlobeIcon />
        <TabTitle $ls={-0.17}>KEA ONLINE PAYMENT</TabTitle>
        <CloseIcon s={6} color="#222" />
      </Tab>
      <Slot $w={26}>
        <Line s={7} box={8} color="#2b2830" w={1.1}>
          <path d="M4 .8v6.400M.8 4h6.400" />
        </Line>
      </Slot>
      <Spacer />
      <Slot $w={26}>
        <MinIcon s={7} color="#b9acc4" />
      </Slot>
      <Slot $w={26}>
        <RestoreIcon s={7} color="#222" />
      </Slot>
      <Slot $w={27}>
        <CloseIcon s={7} color="#222" />
      </Slot>
    </TabStrip>
    <AddressRow>
      <Slot $w={24}>
        <ArrowIcon />
      </Slot>
      <Slot $w={17}>
        <ArrowIcon right />
      </Slot>
      <Slot $w={25}>
        <ReloadIcon />
      </Slot>
      <Omnibox>
        <SiteChip>
          <TuneIcon />
        </SiteChip>
        <Url>
          <b>cetonline.karnataka.gov.in</b>
          /keapaymentonline_pgcet/keapayment.aspx?cetno=b4656&type=6&securitycode=6toXvppyyFzRvN6dppwQH63GTWdZ+CGeWSYCXnp4R4M=
        </Url>
        <StarIcon />
      </Omnibox>
      <Spacer />
      <Slot $w={16}>
        <Avatar>G</Avatar>
      </Slot>
      <Slot $w={25}>
        <MoreIcon />
      </Slot>
    </AddressRow>
    <BookmarkRow>
      <Slot $w={22}>
        <AppsIcon />
      </Slot>
      <Spacer />
      <Divider $h={8} $color="#ddcfe3" />
      <Slot $w={4} />
      <Slot $w={19}>
        <FolderLine />
      </Slot>
      <Label $w={46} $size={6.7} $color="#4b4650" $ls={-0.15}>
        All Bookmarks
      </Label>
      <Slot $w={5} />
    </BookmarkRow>
    <Viewport>
      <Sidebar />
      <PaymentPage />
      <Scrollbar>
        <ScrollArrow />
        <ScrollThumb />
        <ScrollArrow $down />
      </Scrollbar>
    </Viewport>
    <InnerTaskbar />
  </Browser>
);

const DesktopTaskbar: React.FC = () => (
  <Taskbar $h={33}>
    <Slot $w={39}>
      <WindowsLogo s={14} />
    </Slot>
    <Slot $w={2} />
    <SearchBox $w={238} $h={32} $gap={7}>
      <SearchGlass s={14} />
      <Label $w={138} $size={11.7} $ls={0.08}>
        Type here to search
      </Label>
      <Sparkles w={52} />
    </SearchBox>
    <Slot $w={43}>
      <TaskViewIcon s={15} />
    </Slot>
    <TaskButton $w={42}>
      <CopilotIcon />
    </TaskButton>
    <TaskButton $w={41}>
      <ExplorerIcon />
    </TaskButton>
    <TaskButton $w={41}>
      <FirefoxIcon />
    </TaskButton>
    <TaskButton $w={41}>
      <GameIcon />
    </TaskButton>
    <TaskButton $w={42}>
      <FacebookIcon />
    </TaskButton>
    <TaskButton $w={41}>
      <YoutubeIcon />
    </TaskButton>
    <TaskButton $w={42}>
      <ChromeIcon badge="user" />
    </TaskButton>
    <TaskButton $w={39} $line={39} $active>
      <PhotosIcon s={18} />
    </TaskButton>
    <TaskButton $w={45} $line={34}>
      <ObsIcon />
    </TaskButton>
    <Spacer />
    <Slot $w={30}>
      <HazeIcon />
    </Slot>
    <Label $w={33} $size={12} $ls={-0.2}>
      24°C
    </Label>
    <Label $w={41} $size={12} $ls={-0.15}>
      Haze
    </Label>
    <Slot $w={20}>
      <Chevron s={12} up w={0.8} />
    </Slot>
    <Slot $w={20}>
      <MicIcon />
    </Slot>
    <Slot $w={20}>
      <CameraIcon />
    </Slot>
    <Slot $w={20}>
      <BatteryIcon />
    </Slot>
    <Slot $w={22}>
      <SpeakerIcon />
    </Slot>
    <Slot $w={4} />
    <Label $w={29} $size={10.1} $ls={-0.35}>
      ENG
    </Label>
    <Clock $w={51} $size={10.2} $lh={15} $ls={-0.25}>
      20:11
      <br />
      17-11-2024
    </Clock>
    <Slot $w={46}>
      <BubbleIcon />
    </Slot>
    <Divider $h={33} $color="#b8b8b8" />
    <Slot $w={3} />
  </Taskbar>
);

const App: React.FC = () => (
  <>
    <GlobalStyle />
    <Screen>
      <ViewerBar>
        <BarGroup>
          <EditButton>
            <EditIcon />
            Edit
          </EditButton>
          {[RotateIcon, TrashIcon, PrintIcon, ShareIcon, PlayIcon, DotsIcon].map((Icon, i) => (
            <Slot key={i} $w={40}>
              <Icon />
            </Slot>
          ))}
        </BarGroup>
        <FileName>Screenshot (286).png</FileName>
        <BarGroup $end>
          {[PhotosIcon, DesignerIcon, ClipchampIcon, CloudOffIcon].map((Icon, i) => (
            <Slot key={i} $w={40}>
              <Icon />
            </Slot>
          ))}
          <Slot $w={12}>
            <Divider $h={30} $color="#2c2c2c" />
          </Slot>
          <Slot $w={40}>
            <MinIcon />
          </Slot>
          <Slot $w={40}>
            <RestoreIcon />
          </Slot>
          <Slot $w={40}>
            <CloseIcon />
          </Slot>
        </BarGroup>
      </ViewerBar>
      <Canvas>
        <BrowserWindow />
      </Canvas>
      <StatusBar>
        <Slot $w={34}>
          <FilmstripIcon />
        </Slot>
        <Divider $h={20} $color="#3d3d3d" />
        <Slot $w={38}>
          <HeartIcon />
        </Slot>
        <Slot $w={31}>
          <InfoIcon />
        </Slot>
        <Slot $w={9}>
          <Divider $h={12} $color="#777" />
        </Slot>
        <Slot $w={26}>
          <DimensionsIcon />
        </Slot>
        <Label $w={70} $size={11} $color="#8a8a8a" $ls={0}>
          1920 x 1080
        </Label>
        <Slot $w={15}>
          <SaveIcon />
        </Slot>
        <Slot $w={7} />
        <Label $w={380} $size={11} $color="#8a8a8a" $ls={-0.05}>
          208.8 KB
        </Label>
        <Slot $w={16}>
          <FocusIcon />
        </Slot>
        <Spacer />
        <Slot $w={37}>
          <FitIcon />
        </Slot>
        <ZoomLevel>
          <Label $w={33} $size={11} $color="#f0f0f0" $ls={-0.3}>
            85%
          </Label>
          <Chevron s={9} color="#d0d0d0" w={0.8} />
        </ZoomLevel>
        <Slot $w={35}>
          <ZoomIcon />
        </Slot>
        <Slider>
          <Track $w={11} $color="#76b9ed" />
          <Thumb />
          <Track $w={81} $color="#9a9a9a" />
        </Slider>
        <Slot $w={37}>
          <ZoomIcon plus />
        </Slot>
        <Divider $h={20} $color="#353535" />
        <Slot $w={35}>
          <ExpandIcon />
        </Slot>
      </StatusBar>
      <DesktopTaskbar />
    </Screen>
  </>
);

export default App;
